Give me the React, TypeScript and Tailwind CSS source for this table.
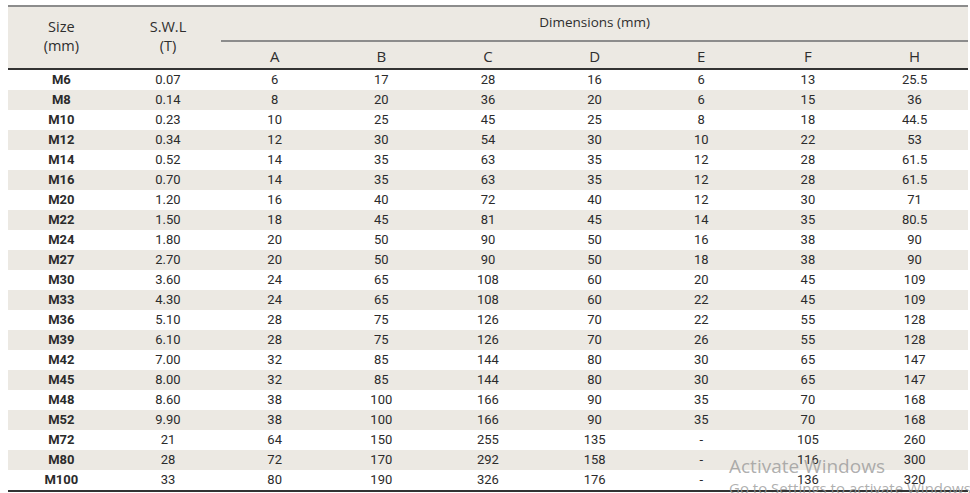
const rows: [string, string, string, string, string, string, string, string, string][] = [
  ["M6", "0.07", "6", "17", "28", "16", "6", "13", "25.5"],
  ["M8", "0.14", "8", "20", "36", "20", "6", "15", "36"],
  ["M10", "0.23", "10", "25", "45", "25", "8", "18", "44.5"],
  ["M12", "0.34", "12", "30", "54", "30", "10", "22", "53"],
  ["M14", "0.52", "14", "35", "63", "35", "12", "28", "61.5"],
  ["M16", "0.70", "14", "35", "63", "35", "12", "28", "61.5"],
  ["M20", "1.20", "16", "40", "72", "40", "12", "30", "71"],
  ["M22", "1.50", "18", "45", "81", "45", "14", "35", "80.5"],
  ["M24", "1.80", "20", "50", "90", "50", "16", "38", "90"],
  ["M27", "2.70", "20", "50", "90", "50", "18", "38", "90"],
  ["M30", "3.60", "24", "65", "108", "60", "20", "45", "109"],
  ["M33", "4.30", "24", "65", "108", "60", "22", "45", "109"],
  ["M36", "5.10", "28", "75", "126", "70", "22", "55", "128"],
  ["M39", "6.10", "28", "75", "126", "70", "26", "55", "128"],
  ["M42", "7.00", "32", "85", "144", "80", "30", "65", "147"],
  ["M45", "8.00", "32", "85", "144", "80", "30", "65", "147"],
  ["M48", "8.60", "38", "100", "166", "90", "35", "70", "168"],
  ["M52", "9.90", "38", "100", "166", "90", "35", "70", "168"],
  ["M72", "21", "64", "150", "255", "135", "-", "105", "260"],
  ["M80", "28", "72", "170", "292", "158", "-", "116", "300"],
  ["M100", "33", "80", "190", "326", "176", "-", "136", "320"],
];

const dims = ["A", "B", "C", "D", "E", "F", "H"];

export default function App() {
  return (
    <div className="relative h-[493px] w-[970px] overflow-hidden bg-white pt-[5px] pl-[8px] pr-[2px] text-[#2b2b2b]">
      <table className="w-[960px] table-fixed border-collapse font-['Roboto',sans-serif] text-[13px]">
        <colgroup>
          {Array.from({ length: 9 }).map((_, i) => (
            <col key={i} className="w-[106.6px]" />
          ))}
        </colgroup>
        <thead className="bg-[#ece9e3] font-['Open_Sans',sans-serif] text-[#2e2e2e]">
          <tr className="border-t-2 border-[#8c8c8c]">
            <th rowSpan={2} className="pt-[10px] align-top text-[14.5px] font-medium leading-[19px]">
              Size
              <br />
              (mm)
            </th>
            <th rowSpan={2} className="pt-[10px] align-top text-[14.5px] font-medium leading-[19px]">
              S.W.L
              <br />
              (T)
            </th>
            <th colSpan={7} className="h-[35px] pb-[3px] text-[13.5px] font-normal">
              Dimensions (mm)
            </th>
          </tr>
          <tr className="border-b-2 border-[#333]">
            {dims.map((d) => (
              <th key={d} className="h-[27px] border-t-2 border-[#8c8c8c] pt-[3px] text-[15px] font-normal">
                {d}
              </th>
            ))}
          </tr>
        </thead>
        <tbody className="border-b-2 border-[#333]">
          {rows.map((r, i) => (
            <tr key={r[0]} className={i % 2 === 1 ? "bg-[#ece9e3]" : "bg-white"}>
              {r.map((c, j) => (
                <td
                  key={j}
                  className={`h-[20px] p-0 text-center leading-[20px] ${j === 0 ? "font-bold" : ""}`}
                >
                  {c}
                </td>
              ))}
            </tr>
          ))}
        </tbody>
      </table>
      <div className="pointer-events-none absolute left-[729px] top-[454px] whitespace-nowrap font-['Open_Sans',sans-serif] text-[#9a9a9a]/80">
        <div className="text-[19px] leading-[24px]">Activate Windows</div>
        <div className="text-[15px] leading-[20px]">Go to Settings to activate Windows.</div>
      </div>
    </div>
  );
}
